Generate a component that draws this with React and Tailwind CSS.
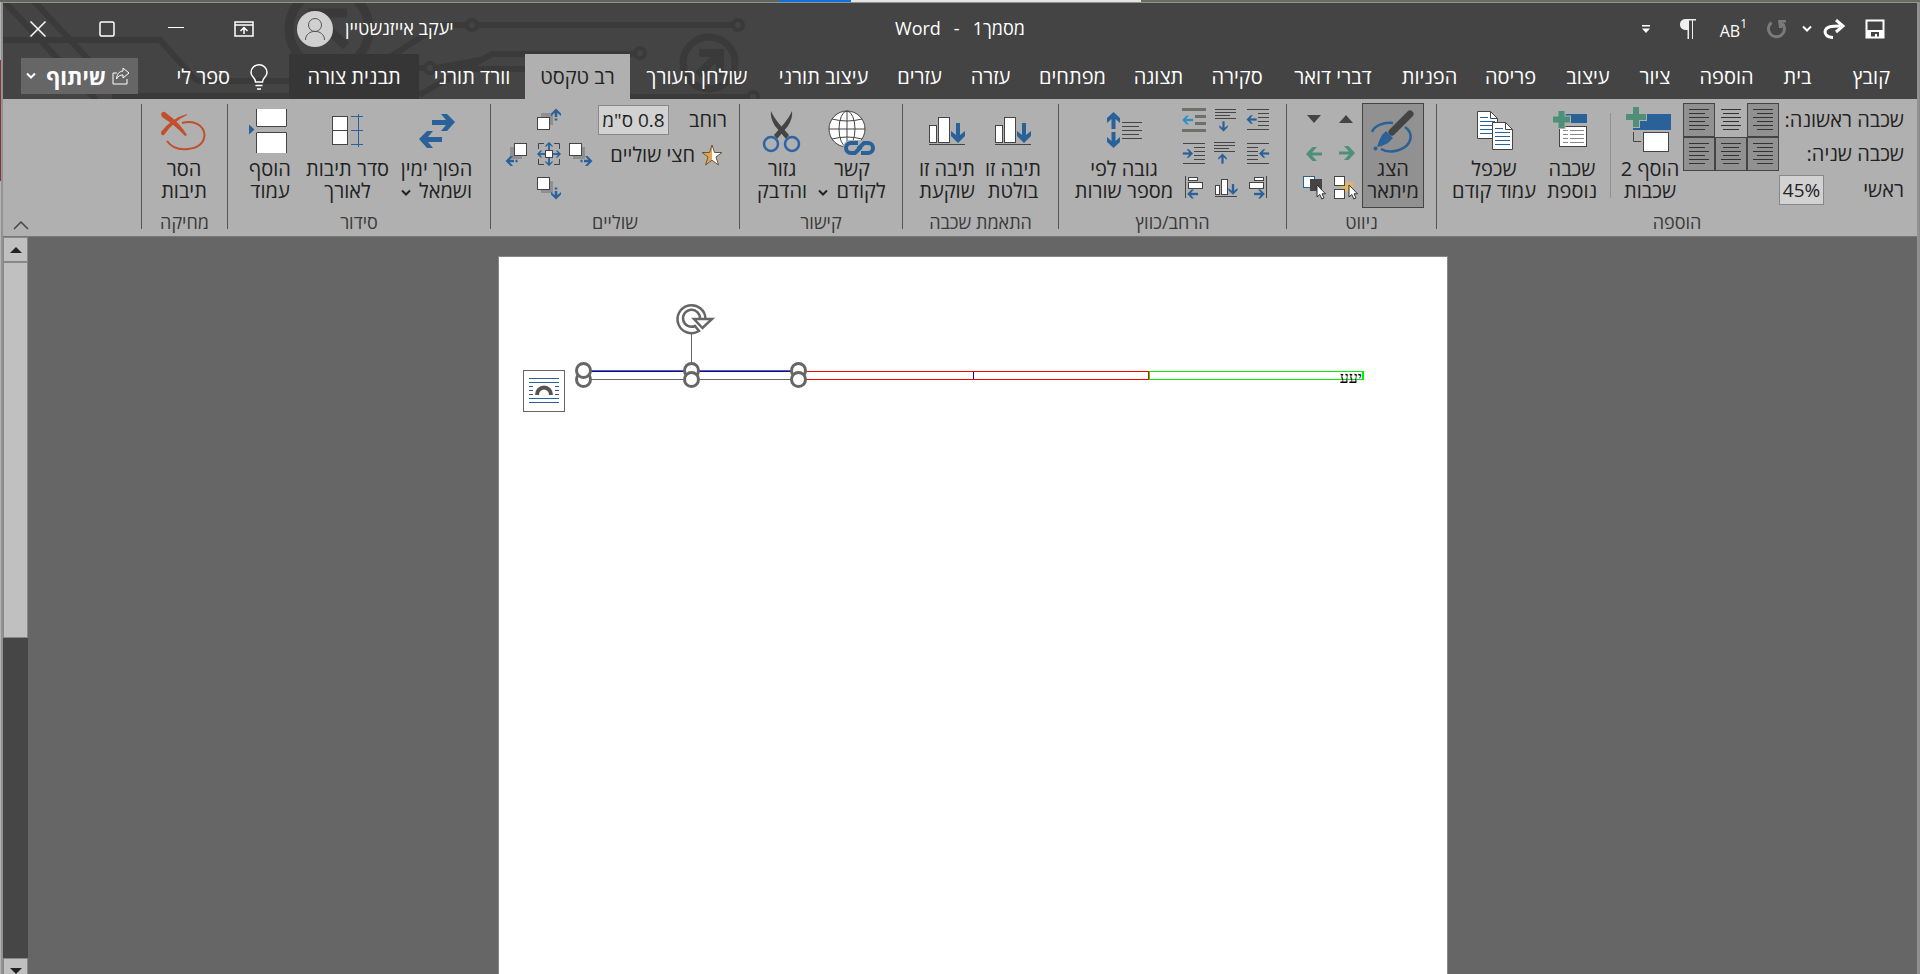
import React, { useState } from "react";

const BLUE = "#2b6199";
const DARK = "#444444";
const GREEN = "#4f8f78";

const tabs = [
  { name: "קובץ", width: "w-[79px] ml-[5px]" },
  { name: "בית", width: "w-[59px]" },
  { name: "הוספה", width: "w-[83px]" },
  { name: "ציור", width: "w-[60px]" },
  { name: "עיצוב", width: "w-[74px]" },
  { name: "פריסה", width: "w-[81px]" },
  { name: "הפניות", width: "w-[81px]" },
  { name: "דברי דואר", width: "w-[112px]" },
  { name: "סקירה", width: "w-[80px]" },
  { name: "תצוגה", width: "w-[77px]" },
  { name: "מפתחים", width: "w-[95px]" },
  { name: "עזרה", width: "w-[69px]" },
  { name: "עזרים", width: "w-[73px]" },
  { name: "עיצוב תורני", width: "w-[119px]" },
  { name: "שולחן העורך", width: "w-[134px]" },
  { name: "רב טקסט", width: "w-[105px]" },
  { name: "וורד תורני", width: "w-[106px]" },
  { name: "תבנית צורה", width: "w-[130px]", context: true },
];

function Chevron({ className = "" }) {
  return (
    <svg width="10" height="8" viewBox="0 0 10 8" className={`inline-block ${className}`}>
      <path d="M1 1.5L5 5.5L9 1.5" fill="none" stroke="currentColor" strokeWidth="2" />
    </svg>
  );
}

// arrow with a heavy chevron head, drawn pointing up inside a 12x12 box
function Arrow({ x, y, turn = 0, size = 1, color = BLUE, dotted = false }) {
  return (
    <g transform={`translate(${x} ${y}) rotate(${turn}) scale(${size})`}>
      <path d="M-5 1V-1.5L0 -6.5L5 -1.5V1L1.5 -2H-1.5Z" fill={color} />
      <path
        d="M0 -4V5.5"
        stroke={color}
        strokeWidth="2.6"
        strokeDasharray={dotted ? "6 1.5 2 5" : undefined}
      />
    </g>
  );
}

function Icon({ children, w = 24, h = 24 }) {
  return (
    <svg width={w} height={h} viewBox={`0 0 ${w} ${h}`} className="shrink-0">
      {children}
    </svg>
  );
}

function BigIcon({ children }) {
  return (
    <svg width="48" height="54" viewBox="0 0 48 54" className="shrink-0">
      {children}
    </svg>
  );
}

function BigButton({ icon, lines, width, active, chevron }) {
  return (
    <button
      className={`flex h-[105px] shrink-0 flex-col items-center border text-[20px] leading-[22px] whitespace-nowrap ${width} ${
        active ? "border-[#444] bg-[#919191]" : "border-transparent"
      }`}
    >
      {icon}
      <span className="block">
        {lines[0]}
        <br />
        {lines[1]}
        {chevron && <Chevron className="mr-2 align-middle" />}
      </span>
    </button>
  );
}

function Group({ label, width, children }) {
  return (
    <section className={`flex shrink-0 ${width}`} aria-label={label}>
      <div className="flex min-w-0 flex-1 flex-col">
        <div className="flex h-[109px] pt-1 pr-3">{children}</div>
        <div className="text-center text-[18px] leading-[28px] text-[#3a3a3a]">{label}</div>
      </div>
      <div className="mt-[5px] h-[125px] w-px bg-[#555]" />
    </section>
  );
}

function IconButton({ label, children }) {
  return (
    <button aria-label={label} className="flex h-[34px] w-8 items-center justify-center">
      {children}
    </button>
  );
}

function AlignToggle({ align, on, onClick, label }) {
  const short = { right: 4, center: 2, left: 0 }[align];
  return (
    <button
      aria-label={label}
      aria-pressed={on}
      onClick={onClick}
      className={`flex h-[34px] w-8 items-center justify-center border ${
        on ? "border-[#444] bg-[#919191]" : "border-transparent"
      }`}
    >
      <Icon w={20} h={22}>
        {[0, 4, 8, 12, 16, 20].map((y, i) => (
          <rect
            key={y}
            x={i % 2 ? short : 0}
            y={y}
            width={i % 2 ? 16 : 20}
            height="1"
            fill="#333"
          />
        ))}
      </Icon>
    </button>
  );
}

function Lines({ side }) {
  return (
    <g fill="#444">
      <rect x="1" y="1" width="22" height="1" />
      <rect x="1" y="21" width="22" height="1" />
      {[5, 9, 13, 17].map((y) => (
        <rect key={y} x={side === "right" ? 12 : 1} y={y} width="11" height="1" />
      ))}
    </g>
  );
}

function Paragraph({ x, y }) {
  return (
    <g fill="#444">
      <rect x={x} y={y} width="21" height="1" />
      <rect x={x} y={y + 3} width="21" height="1" />
      <rect x={x} y={y + 6} width="15" height="1" />
      <rect x={x} y={y + 9} width="21" height="1" />
    </g>
  );
}

function Bars() {
  return (
    <BigIcon>
      <rect x="6.5" y="21.5" width="7" height="17" fill="#fff" stroke={DARK} />
      <rect x="15.5" y="13.5" width="11" height="25" fill="#fff" stroke={DARK} />
      <rect x="6" y="40" width="36" height="1" fill={DARK} />
      <path d="M33 19H37V31L42 27V32L35 39L28 32V27L33 31Z" fill={BLUE} />
    </BigIcon>
  );
}

function Plus({ x, y, size = 20 }) {
  const a = (size - 6) / 2;
  return (
    <path
      transform={`translate(${x} ${y})`}
      d={`M${a} 0h6v${a}h${a}v6h-${a}v${a}h-6v-${a}h-${a}v-6h${a}z`}
      fill={GREEN}
      stroke="#b0b0b0"
      strokeWidth="2"
      paintOrder="stroke"
    />
  );
}

function Doc({ x, y }) {
  return (
    <g transform={`translate(${x} ${y})`}>
      <path d="M0.5 0.5H13.5L20.5 7.5V27.5H0.5Z" fill="#fff" stroke={DARK} />
      <path d="M13.5 0.5V7.5H20.5" fill="none" stroke={DARK} />
      <path d="M3 6.5H11M3 10.5H18M3 14.5H18M3 18.5H18M3 22.5H18" stroke={BLUE} />
    </g>
  );
}

function Cursor({ x, y }) {
  return (
    <path
      transform={`translate(${x} ${y})`}
      d="M0 0V12L2.8 9.5L4.8 14L7 13L5 8.8H8.5Z"
      fill="#fff"
      stroke="#333"
    />
  );
}

function ShiftBox({ dir }) {
  const arrow = {
    up: [19, 7, 0],
    down: [19, 17, 180],
    left: [7, 19, -90],
    right: [17, 19, 90],
  }[dir];
  const box = { up: [0, 9], down: [0, 1], left: [9, 1], right: [0, 1] }[dir];
  const shadow = { up: [4, -4], down: [4, 4], left: [-4, 4], right: [4, 4] }[dir];
  return (
    <Icon>
      <rect x={box[0] + shadow[0]} y={box[1] + shadow[1]} width="12" height="12" fill="#8f8f8f" />
      <rect x={box[0] + 0.5} y={box[1] + 0.5} width="12" height="12" fill="#fff" stroke={DARK} />
      <Arrow x={arrow[0]} y={arrow[1]} turn={arrow[2]} dotted />
    </Icon>
  );
}

function AlignEdge({ flip }) {
  return (
    <g transform={flip ? "translate(24 0) scale(-1 1)" : undefined}>
      <rect x="20" y="0" width="1" height="22" fill={DARK} />
      <rect x="8.5" y="1.5" width="9" height="3" fill="#fff" stroke={DARK} />
      <rect x="3.5" y="6.5" width="14" height="6" fill="#fff" stroke={DARK} />
      <Arrow x={13} y={18} turn={90} size={0.9} />
    </g>
  );
}

function Circuit() {
  return (
    <svg
      className="pointer-events-none absolute top-0 left-0"
      width="800"
      height="96"
      viewBox="3 3 800 96"
      fill="none"
      stroke="#3a3a3a"
      strokeWidth="6"
    >
      <path d="M3 0L96 100M33 0L126 100" />
      <path d="M3 40H160L194 78Q197 81 201 81H290M112 96H290" />
      <circle cx="329" cy="29" r="40" strokeWidth="9" />
      <path d="M308 13H347M313 15L346 46" strokeWidth="9" />
      <path d="M390 57L437 27Q440 25 444 25H466" />
      <circle cx="472" cy="25" r="5" strokeWidth="4" />
      <path d="M419 68H424M436 68L480 60M419 95L492 54H633" />
      <circle cx="430" cy="68" r="5" strokeWidth="4" />
      <path d="M478 25H732M440 69H525" />
      <circle cx="738" cy="25" r="5" strokeWidth="4" />
      <circle cx="640" cy="53" r="5" strokeWidth="4" />
      <circle cx="709" cy="63" r="26" strokeWidth="7" />
      <path d="M699 53H720V75M720 53L698 75" strokeWidth="8" />
      <path d="M630 97H746" />
      <circle cx="753" cy="97" r="5" strokeWidth="4" />
    </svg>
  );
}

function TitleBar() {
  return (
    <div className="relative flex h-[51px] items-center justify-between px-[27px]">
      <div className="flex flex-1 items-center">
        <button aria-label="שמירה" className="mr-[5px]">
          <Icon w={20} h={20}>
            <path d="M1.5 1.5H18.5V18.5H1.5Z" fill="none" stroke="#fff" strokeWidth="2" />
            <path d="M2 11H18V18H14V13H6V18H2Z" fill="#fff" />
            <path d="M10 15H12V18H10Z" fill="#fff" />
          </Icon>
        </button>
        <button aria-label="ביצוע חוזר" className="mr-5">
          <Icon w={22} h={20}>
            <path d="M10 18.5C4 18.500 1 15 2.5 11C4 7.5 8 7 17 7" fill="none" stroke="#fff" strokeWidth="3" />
            <path d="M13 1L20 7L13 13" fill="none" stroke="#fff" strokeWidth="3" />
          </Icon>
        </button>
        <button aria-label="אפשרויות ביצוע חוזר" className="mr-[11px] flex text-white">
          <Chevron />
        </button>
        <button aria-label="חזרה" className="mr-[15px]">
          <Icon w={20} h={20}>
            <path d="M4.5 3.5A8 8 0 1 0 15.5 4.5" fill="none" stroke="#7a7a7a" strokeWidth="3" />
            <path d="M11 1H19V3.5H15.5V9H12Z" fill="#7a7a7a" />
          </Icon>
        </button>
        <button aria-label="הערת שוליים" className="mr-5 flex text-[16px] leading-5" dir="ltr">
          <span className="mt-1">AB</span>
          <span className="text-[12px] leading-[14px]">1</span>
        </button>
        <button aria-label="סימני פיסקה" className="mr-6">
          <Icon w={16} h={20}>
            <path d="M7 0H16V1.5H13V20H12V1.5H9V20H7.5V11C2 11 0 9 0 5.5C0 2 2 0 7 0Z" fill="#eee" />
          </Icon>
        </button>
        <button aria-label="התאמה אישית" className="mr-[30px]">
          <Icon w={8} h={8}>
            <path d="M0 0H8V1.5H0ZM0 3.5H8L4 8Z" fill="#fff" />
          </Icon>
        </button>
      </div>
      <h1 className="flex gap-[13px] text-[18px]">
        <span>מסמך1</span>
        <span>-</span>
        <span>Word</span>
      </h1>
      <div className="flex flex-1 items-center justify-end">
        <button className="flex items-center gap-3 text-[18px]">
          <span>יעקב אייזנשטיין</span>
          <Icon w={36} h={36}>
            <circle cx="18" cy="18" r="18" fill="#d0d0d0" />
            <circle cx="18" cy="14" r="6.5" fill="none" stroke="#555" />
            <path d="M8.5 29C8.5 17.5 27.5 17.5 27.5 29" fill="none" stroke="#555" />
          </Icon>
        </button>
        <button aria-label="אפשרויות תצוגה של רצועת הכלים" className="mr-[43px]">
          <Icon w={20} h={16}>
            <path d="M1 1H19V15H1ZM1 4H19" fill="none" stroke="#fff" strokeWidth="1.5" />
            <path d="M10 13V6.5M6.5 10L10 6.5L13.5 10" fill="none" stroke="#fff" strokeWidth="1.5" />
          </Icon>
        </button>
        <button aria-label="מזעור" className="mr-[50px]">
          <Icon w={16} h={16}>
            <rect y="6" width="16" height="1" fill="#fff" />
          </Icon>
        </button>
        <button aria-label="הגדלה" className="mr-[53px]">
          <Icon w={16} h={16}>
            <rect x="1" y="1" width="14" height="14" rx="1.5" fill="none" stroke="#fff" strokeWidth="1.5" />
          </Icon>
        </button>
        <button aria-label="סגירה" className="mr-[53px]">
          <Icon w={16} h={16}>
            <path d="M0.5 0.5L15.5 15.5M15.5 0.5L0.5 15.5" stroke="#fff" strokeWidth="1.5" />
          </Icon>
        </button>
      </div>
    </div>
  );
}

function TabBar({ current, onSelect }) {
  return (
    <nav className="relative flex h-[45px] pr-[6px] text-[20px] leading-6 whitespace-nowrap">
      {tabs.map((tab) => (
        <button
          key={tab.name}
          onClick={() => onSelect(tab.name)}
          className={`shrink-0 ${tab.width} ${
            current === tab.name ? "bg-[#b0b0b0] text-[#222]" : tab.context ? "bg-[#363636]" : ""
          }`}
        >
          {tab.name}
        </button>
      ))}
      <button className="mr-[21px] flex shrink-0 items-center gap-5">
        <Icon w={18} h={26}>
          <path
            d="M5.5 18C5.5 13.5 1 13 1 8.5A8 7.7 0 0 1 17 8.5C17 13 12.5 13.5 12.5 18ZM5.5 21.5H12.5M7 25H11"
            fill="none"
            stroke="#fff"
            strokeWidth="1.5"
          />
        </Icon>
        <span>ספר לי</span>
      </button>
      <button className="mt-1 mr-auto ml-[18px] flex h-9 w-[117px] shrink-0 items-center bg-[#666] pr-2 text-[22px] font-bold">
        <Icon w={18} h={18}>
          <path d="M5 6H1V17H15V12" fill="none" stroke="#fff" />
          <path d="M11 1L17 6L11 11V8C8 8 6 9 4.5 12C5 7 7 4.5 11 4Z" fill="none" stroke="#fff" />
        </Icon>
        <span className="mr-[6px]">שיתוף</span>
        <Chevron className="mr-auto ml-[5px]" />
      </button>
    </nav>
  );
}

function InsertGroup() {
  const [first, setFirst] = useState([true, false, true]);
  const [second, setSecond] = useState([true, true, true]);
  const aligns = ["right", "center", "left"];
  const flip = (list, i) => list.map((v, j) => (j === i ? !v : v));

  return (
    <Group label="הוספה" width="w-[481px]">
      <div className="flex w-[222px] shrink-0 flex-col pr-px text-[20px]">
        <div className="flex">
          <div className="w-[125px] leading-[34px] whitespace-nowrap">
            <div>שכבה ראשונה:</div>
            <div>שכבה שניה:</div>
          </div>
          <div className="grid grid-cols-3">
            {aligns.map((a, i) => (
              <AlignToggle
                key={a}
                align={a}
                label={`שכבה ראשונה ${i + 1}`}
                on={first[i]}
                onClick={() => setFirst(flip(first, i))}
              />
            ))}
            {aligns.map((a, i) => (
              <AlignToggle
                key={a}
                align={a}
                label={`שכבה שניה ${i + 1}`}
                on={second[i]}
                onClick={() => setSecond(flip(second, i))}
              />
            ))}
          </div>
        </div>
        <div className="mt-1 flex items-center">
          <label htmlFor="main" className="w-20">
            ראשי
          </label>
          <input
            id="main"
            dir="ltr"
            defaultValue="45%"
            className="h-[30px] w-[45px] border border-[#888] bg-[#d2d2d2] text-center text-[19px] text-[#222]"
          />
        </div>
      </div>
      <BigButton
        width="w-[66px]"
        lines={["הוסף 2", "שכבות"]}
        icon={
          <BigIcon>
            <rect x="7" y="10" width="38" height="16" fill={BLUE} />
            <Plus x={0} y={3} />
            <path d="M7.5 28V37.5H15" fill="none" stroke={DARK} />
            <rect x="17.5" y="28.5" width="25" height="19" fill="#fff" stroke={DARK} />
          </BigIcon>
        }
      />
      <div className="mt-[10px] mr-[6px] ml-[7px] h-[85px] w-px bg-[#919191]" />
      <BigButton
        width="w-[62px]"
        lines={["שכבה", "נוספת"]}
        icon={
          <BigIcon>
            <rect x="17" y="10" width="22" height="9" fill={BLUE} />
            <rect x="11.5" y="22.5" width="27" height="20" fill="#fff" stroke={DARK} />
            <path
              d="M15 26.5H20M22 26.5H36M15 30.5H20M22 30.5H36M15 34.5H20M22 34.5H36M15 38.5H20M22 38.5H36"
              stroke="#888"
            />
            <Plus x={5} y={7} size={17} />
          </BigIcon>
        }
      />
      <BigButton
        width="w-[94px]"
        lines={["שכפל", "עמוד קודם"]}
        icon={
          <BigIcon>
            <Doc x={7} y={7} />
            <Doc x={22} y={18} />
          </BigIcon>
        }
      />
    </Group>
  );
}

function NavigateGroup() {
  return (
    <Group label="ניווט" width="w-[150px]">
      <BigButton
        active
        width="w-[62px]"
        lines={["הצג", "מיתאר"]}
        icon={
          <BigIcon>
            <path
              d="M3 28C5 22 14 18 24 19M36 23C46 30 42 42 30 46C24 48 17 48 12 45"
              fill="none"
              stroke={BLUE}
              strokeWidth="2.5"
            />
            <path d="M41 10L23 28" stroke={DARK} strokeWidth="7" strokeLinecap="round" />
            <path d="M17 27L24 34L19 39Q14 42 8 43Q10 36 13 31Z" fill={BLUE} />
            <circle cx="6.5" cy="44.5" r="2" fill={BLUE} />
          </BigIcon>
        }
      />
      <div className="grid h-[102px] grid-cols-2">
        <IconButton label="למעלה">
          <Icon>
            <path d="M5 15L12 7L19 15Z" fill={DARK} />
          </Icon>
        </IconButton>
        <IconButton label="למטה">
          <Icon>
            <path d="M5 7L12 15L19 7Z" fill={DARK} />
          </Icon>
        </IconButton>
        <IconButton label="ימינה">
          <Icon>
            <path d="M5 9.5V12.5H15L10 18H14.5L21 11L14.5 4H10L15 9.5Z" fill={GREEN} />
          </Icon>
        </IconButton>
        <IconButton label="שמאלה">
          <Icon>
            <path d="M20 10.5V13.5H10L15 19H10.5L4 12L10.5 5H15L10 10.5Z" fill={GREEN} />
          </Icon>
        </IconButton>
        <IconButton label="בחר תיבות">
          <Icon>
            <rect x="7" y="6" width="12" height="10" fill="#dfb46c" />
            <rect x="0.5" y="0.5" width="10" height="9" fill="#fff" stroke={DARK} />
            <rect x="0.5" y="13.5" width="10" height="9" fill="#fff" stroke={DARK} />
            <Cursor x={15} y={9} />
          </Icon>
        </IconButton>
        <IconButton label="בחר שכבה">
          <Icon>
            <rect x="1.5" y="0.5" width="11" height="11" fill="#fff" stroke={BLUE} />
            <rect x="8" y="3" width="12" height="12" fill={DARK} />
            <Cursor x={15} y={9} />
          </Icon>
        </IconButton>
      </div>
    </Group>
  );
}

function ResizeGroup() {
  return (
    <Group label="הרחב/כווץ" width="w-[228px]">
      <div className="grid h-[102px] shrink-0 grid-cols-3">
        <IconButton label="הרחב שמאלה">
          <Icon>
            <Lines side="right" />
            <Arrow x={6} y={11.5} turn={-90} size={0.85} />
          </Icon>
        </IconButton>
        <IconButton label="הרחב למטה">
          <Icon>
            <Paragraph x={1} y={1} />
            <Arrow x={9.5} y={18} turn={180} size={0.85} />
          </Icon>
        </IconButton>
        <IconButton label="צמצם">
          <Icon>
            <path d="M0 1.5H24M13 8.5H24M13 15.5H24M0 22.5H24" stroke="#70706a" strokeWidth="3" />
            <Arrow x={6} y={12} turn={-90} size={0.9} color="#2f8fc4" />
          </Icon>
        </IconButton>
        <IconButton label="כווץ שמאלה">
          <Icon>
            <Lines side="left" />
            <Arrow x={18.5} y={11.5} turn={-90} size={0.85} />
          </Icon>
        </IconButton>
        <IconButton label="כווץ למעלה">
          <Icon>
            <Paragraph x={0} y={0} />
            <Arrow x={8.5} y={17} size={0.85} />
          </Icon>
        </IconButton>
        <IconButton label="כווץ ימינה">
          <Icon>
            <Lines side="right" />
            <Arrow x={5.5} y={11.5} turn={90} size={0.85} />
          </Icon>
        </IconButton>
        <IconButton label="הצמד לימין">
          <Icon>
            <AlignEdge />
          </Icon>
        </IconButton>
        <IconButton label="הצמד לתחתית">
          <Icon>
            <rect x="1.5" y="9.5" width="4" height="9" fill="#fff" stroke={DARK} />
            <rect x="7.5" y="3.5" width="6" height="15" fill="#fff" stroke={DARK} />
            <rect x="1" y="20" width="22" height="1" fill={DARK} />
            <Arrow x={19} y={13} turn={180} size={0.9} />
          </Icon>
        </IconButton>
        <IconButton label="הצמד לשמאל">
          <Icon>
            <AlignEdge flip />
          </Icon>
        </IconButton>
      </div>
      <BigButton
        width="w-[108px]"
        lines={["גובה לפי", "מספר שורות"]}
        icon={
          <BigIcon>
            <path d="M13.5 8L20 14V19L15.5 15V25H11.5V15L7 19V14Z" fill={BLUE} />
            <path d="M13.5 44L20 38V33L15.5 37V28H11.5V37L7 33V38Z" fill={BLUE} />
            <path d="M22 18.5H42M22 22.5H39M22 26.5H42M22 30.5H39M22 34.5H42" stroke={DARK} />
          </BigIcon>
        }
      />
    </Group>
  );
}

function LayerGroup() {
  return (
    <Group label="התאמת שכבה" width="w-[156px]">
      <BigButton width="w-[66px]" lines={["תיבה זו", "בולטת"]} icon={<Bars />} />
      <BigButton width="w-[66px]" lines={["תיבה זו", "שוקעת"]} icon={<Bars />} />
    </Group>
  );
}

function LinkGroup() {
  return (
    <Group label="קישור" width="w-[163px]">
      <BigButton
        chevron
        width="w-[76px]"
        lines={["קשר", "לקודם"]}
        icon={
          <BigIcon>
            <circle cx="19" cy="25" r="18" fill="#fff" stroke={DARK} />
            <ellipse cx="19" cy="25" rx="8" ry="18" fill="none" stroke={DARK} />
            <path d="M19 7V43M1 25H37M4 15Q19 19 34 15M4 35Q19 31 34 35" fill="none" stroke={DARK} />
            <rect x="15" y="36" width="33" height="16" rx="8" fill="#b0b0b0" />
            <g fill="none" stroke={BLUE} strokeWidth="4">
              <path d="M30 39H23A5 5 0 0 0 23 49H27L33 43" />
              <path d="M33 49H40A5 5 0 0 0 40 39H36L30 45" />
            </g>
          </BigIcon>
        }
      />
      <BigButton
        width="w-[64px]"
        lines={["גזור", "והדבק"]}
        icon={
          <BigIcon>
            <path d="M13 7Q12 14 17 22L28 35L31 31L23 22Q16 14 13 7Z" fill={DARK} />
            <path d="M34 7Q35 14 30 22L19 35L16 31L24 22Q31 14 34 7Z" fill={DARK} />
            <circle cx="13" cy="40" r="7" fill="none" stroke="#2b65a5" strokeWidth="2.5" />
            <circle cx="34" cy="40" r="7" fill="none" stroke="#2b65a5" strokeWidth="2.5" />
          </BigIcon>
        }
      />
    </Group>
  );
}

function MarginsGroup() {
  return (
    <Group label="שוליים" width="w-[249px]">
      <div className="flex w-[130px] shrink-0 flex-col text-[20px]">
        <div className="mt-[2px] flex items-center justify-between">
          <label htmlFor="width">רוחב</label>
          <input
            id="width"
            defaultValue={'0.8 ס"מ'}
            className="ml-px h-[30px] w-[71px] border border-[#888] bg-[#d2d2d2] text-center text-[19px] text-[#222]"
          />
        </div>
        <button className="mt-1 mr-1 flex h-8 items-center gap-[6px] whitespace-nowrap">
          <Icon w={22} h={22}>
            <path d="M11 1L13.5 8.5H21L15 13L17.5 21L11 16.2L4.5 21L7 13L1 8.5H8.5Z" fill="#fff" />
            <path d="M11 1V16.2L4.5 21L7 13L1 8.5H8.5Z" fill="#dfa550" />
            <path
              d="M11 1L13.5 8.5H21L15 13L17.5 21L11 16.2L4.5 21L7 13L1 8.5H8.5Z"
              fill="none"
              stroke="#6a5535"
            />
          </Icon>
          חצי שוליים
        </button>
      </div>
      <div className="grid h-[102px] shrink-0 grid-cols-3">
        <span />
        <IconButton label="שוליים למעלה">
          <ShiftBox dir="up" />
        </IconButton>
        <span />
        <IconButton label="שוליים מימין">
          <ShiftBox dir="right" />
        </IconButton>
        <IconButton label="שוליים מכל הצדדים">
          <Icon>
            <path
              d="M1.5 7V1.5H7M17 1.5H22.5V7M22.5 17V22.5H17M7 22.5H1.5V17"
              fill="none"
              stroke={DARK}
            />
            <Arrow x={12} y={4.5} size={0.7} />
            <Arrow x={12} y={19.5} turn={180} size={0.7} />
            <Arrow x={4.5} y={12} turn={-90} size={0.7} />
            <Arrow x={19.5} y={12} turn={90} size={0.7} />
            <rect x="8.5" y="8.5" width="7" height="7" fill="#fff" stroke={DARK} />
          </Icon>
        </IconButton>
        <IconButton label="שוליים משמאל">
          <ShiftBox dir="left" />
        </IconButton>
        <span />
        <IconButton label="שוליים למטה">
          <ShiftBox dir="down" />
        </IconButton>
      </div>
    </Group>
  );
}

function ArrangeGroup() {
  return (
    <Group label="סידור" width="w-[263px]">
      <BigButton
        chevron
        width="w-[83px]"
        lines={["הפוך ימין", "ושמאל"]}
        icon={
          <BigIcon>
            <path d="M19 16H33L28 10H34L42 18L34 27H28L33 21H19Z" fill={BLUE} />
            <path d="M29 33H15L20 27H14L6 35L14 44H20L15 38H29Z" fill={BLUE} />
          </BigIcon>
        }
      />
      <BigButton
        width="w-[95px]"
        lines={["סדר תיבות", "לאורך"]}
        icon={
          <BigIcon>
            <rect x="8.5" y="12.5" width="15" height="28" fill="#fff" stroke={DARK} />
            <path d="M8 26.5H24" stroke={DARK} />
            <path d="M27 12.5H39M27 26.5H39M27 40.5H39M34.5 10V43" stroke={BLUE} />
          </BigIcon>
        }
      />
      <BigButton
        width="w-[60px]"
        lines={["הוסף", "עמוד"]}
        icon={
          <BigIcon>
            <rect x="10" y="5" width="31" height="18" fill="#fff" />
            <path d="M10.5 5V22.5H40.5V5" fill="none" stroke={DARK} />
            <rect x="10" y="28" width="31" height="21" fill="#fff" />
            <path d="M10.5 49V28.5H40.5V49" fill="none" stroke={DARK} />
            <path d="M3 20.5L8.5 25.5L3 30.5Z" fill={BLUE} />
          </BigIcon>
        }
      />
    </Group>
  );
}

function DeleteGroup() {
  return (
    <Group label="מחיקה" width="w-[86px]">
      <BigButton
        width="w-[62px]"
        lines={["הסר", "תיבות"]}
        icon={
          <BigIcon>
            <path
              d="M7 37C12 44 20 46 28 45C38 44 44 39 44.5 31C44 21 34 16 22 19"
              fill="none"
              stroke="#c24f2c"
              strokeWidth="2"
            />
            <path d="M1 10Q3 6 6 9Q20 19 27 31L25 32Q16 22 2 13Z" fill="#c24f2c" />
            <path d="M27 11Q14 17 4 31Q1 32 1 28Q12 14 27 10Z" fill="#c24f2c" />
          </BigIcon>
        }
      />
    </Group>
  );
}

function Ribbon() {
  return (
    <div className="flex h-[138px] shrink-0 border-b border-[#777] bg-[#b0b0b0] text-[#222]">
      <InsertGroup />
      <NavigateGroup />
      <ResizeGroup />
      <LayerGroup />
      <LinkGroup />
      <MarginsGroup />
      <ArrangeGroup />
      <DeleteGroup />
      <button aria-label="כווץ את רצועת הכלים" className="mr-auto mb-[6px] ml-[10px] self-end">
        <Icon w={16} h={10}>
          <path d="M1 9L8 2L15 9" fill="none" stroke="#444" strokeWidth="1.5" />
        </Icon>
      </button>
    </div>
  );
}

function ScrollBar() {
  return (
    <div className="flex w-[25px] shrink-0 flex-col bg-[#464646]">
      <button
        aria-label="גלול למעלה"
        className="flex h-[25px] shrink-0 items-center justify-center border border-[#888] bg-[#c0c0c0]"
      >
        <Icon w={12} h={6}>
          <path d="M0 6L6 0L12 6Z" fill="#222" />
        </Icon>
      </button>
      <div className="h-[376px] shrink-0 border border-[#888] bg-[#c0c0c0]" />
      <button
        aria-label="גלול למטה"
        className="mt-auto flex h-4 shrink-0 items-end justify-center border border-b-0 border-[#888] bg-[#c0c0c0]"
      >
        <Icon w={12} h={6}>
          <path d="M0 0L6 6L12 0Z" fill="#222" />
        </Icon>
      </button>
    </div>
  );
}

function Handle({ x, y }) {
  return <circle cx={x} cy={y} r="7" fill="#fff" stroke="#666" strokeWidth="3" />;
}

// the text boxes on the page, with the selected one showing its handles
function Page() {
  return (
    <div className="relative mt-[19px] w-[950px] shrink-0 border border-b-0 border-[#888] bg-white">
      <svg width="948" height="200" viewBox="499 257 948 200" fill="none">
        <rect x="798.5" y="371.5" width="350" height="8" stroke="#f00" />
        <path d="M973.5 372V379" stroke="#00f" />
        <rect x="1149.5" y="371.5" width="213" height="8" stroke="#00f000" />
        <path d="M1363 371V380" stroke="#00f000" strokeWidth="2" />
        <path d="M583 379.5H798" stroke="#666" />
        <path d="M583 370.5H798" stroke="#666" />
        <path d="M583 371.5H798" stroke="#0000e0" />
        <path d="M691.5 334V364" stroke="#666" />
        <Handle x={583.5} y={379.5} />
        <Handle x={583.5} y={370.5} />
        <Handle x={691.5} y={370.5} />
        <Handle x={691.5} y={379.5} />
        <Handle x={798.5} y={370.5} />
        <Handle x={798.5} y={379.5} />
        <g stroke="#666" strokeWidth="2.5">
          <path d="M705.5 319A14 14 0 1 0 699 331L695 326A8.5 8.5 0 1 1 700 319" />
          <path d="M694 319H712L702.5 328Z" fill="#fff" strokeWidth="2.5" />
        </g>
      </svg>
      <p className="absolute top-[111px] right-[85px] font-['Liberation_Serif',serif] text-[16px] leading-5 text-black">
        יעע
      </p>
      <button
        aria-label="אפשרויות פריסה"
        className="absolute top-[113px] left-6 flex h-[42px] w-[42px] items-center justify-center border border-[#666] bg-white"
      >
        <Icon w={30} h={26}>
          <path
            d="M0 0.5H30M0 4.5H30M0 8.5H4M26 8.5H30M0 12.5H4M26 12.5H30M0 16.5H4M26 16.5H30M0 20.5H30M0 24.5H30"
            stroke={BLUE}
          />
          <path d="M8 17A7 7.5 0 0 1 22 17" fill="none" stroke="#555" strokeWidth="4" />
        </Icon>
      </button>
    </div>
  );
}

function App() {
  const [current, setCurrent] = useState("רב טקסט");

  return (
    <div
      dir="rtl"
      className="flex h-screen flex-col overflow-hidden bg-[#b4b4b4] font-['Open_Sans','Noto_Sans',sans-serif]"
    >
      <div className="flex h-[2px] shrink-0 bg-[#5f665f]">
        <div className="w-[779px] bg-[#66705f]" />
        <div className="w-[290px] bg-[#e4e4e4]" />
        <div className="w-[72px] bg-[#0a74d8]" />
      </div>
      <div className="flex min-h-0 flex-1">
        <div className="w-px shrink-0 bg-[#8a8a8a]" />
        <div className="flex min-w-0 flex-1 flex-col border-x-2 border-t border-[#929292]">
          <header className="relative shrink-0 bg-[#444] text-white">
            <Circuit />
            <TitleBar />
            <TabBar current={current} onSelect={setCurrent} />
          </header>
          <Ribbon />
          <main className="flex min-h-0 flex-1 bg-[#666]">
            <div className="flex min-w-0 flex-1 justify-center overflow-hidden pl-px">
              <Page />
            </div>
            <ScrollBar />
          </main>
        </div>
        <div className="w-px shrink-0 bg-[#b4b4b4]">
          <div className="mt-[58px] h-[121px] bg-[#8f3340]" />
        </div>
      </div>
    </div>
  );
}

export default App;
